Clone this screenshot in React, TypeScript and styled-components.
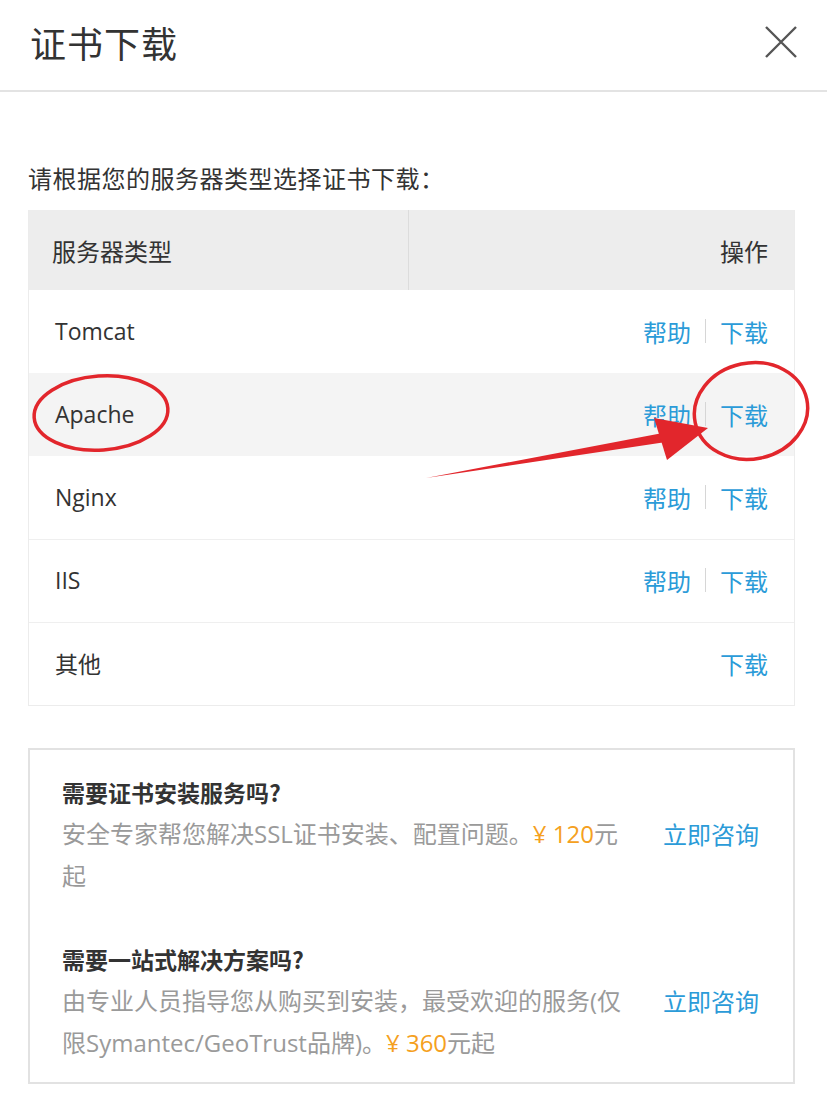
import React from 'react';
import styled, { createGlobalStyle } from 'styled-components';

const GlobalStyle = createGlobalStyle`
  html, body {
    margin: 0;
    padding: 0;
    background: #ffffff;
  }
  body {
    font-family: "Open Sans", "Noto Sans CJK SC", sans-serif;
    color: #333333;
  }
`;

const colors = {
  text: '#333333',
  muted: '#9a9a9a',
  link: '#2b9bd8',
  price: '#f5a020',
  mark: '#e2262c',
};

const Page = styled.div`
  position: relative;
  width: 827px;
  height: 1118px;
  overflow: hidden;
`;

const Header = styled.div`
  height: 90px;
  padding: 0 28px 0 30px;
  display: flex;
  align-items: center;
  justify-content: space-between;
  border-bottom: 2px solid #e3e3e3;
`;

const Title = styled.h1`
  margin: 0;
  font-size: 36px;
  font-weight: 400;
  letter-spacing: 1px;
  color: ${colors.text};
  font-family: "Noto Sans CJK SC", sans-serif;
  line-height: 1;
  padding-bottom: 6px;
`;

const CloseButton = styled.button`
  width: 36px;
  height: 36px;
  padding: 0;
  border: none;
  background: none;
  display: flex;
  align-items: center;
  justify-content: center;
  margin-bottom: 6px;
`;

const Body = styled.div`
  padding: 70px 32px 0 28px;
`;

const Intro = styled.p`
  margin: 0 0 16px;
  font-size: 24px;
  letter-spacing: 0.5px;
  line-height: 32px;
  color: ${colors.text};
  font-family: "Noto Sans CJK SC", sans-serif;
`;

const Table = styled.div`
  border-left: 1px solid #ececec;
  border-right: 1px solid #ececec;
  border-bottom: 1px solid #ececec;
`;

const HeadRow = styled.div`
  display: grid;
  grid-template-columns: 379px 1fr;
  height: 80px;
  background: #ededed;
  font-size: 24px;
  color: ${colors.text};
  font-family: "Noto Sans CJK SC", sans-serif;
`;

const HeadCell = styled.div<{ right?: boolean }>`
  display: flex;
  align-items: center;
  justify-content: ${(p) => (p.right ? 'flex-end' : 'flex-start')};
  padding: 0 26px 0 23px;
  border-left: ${(p) => (p.right ? '1px solid #dcdcdc' : 'none')};
`;

const Row = styled.div<{ active?: boolean; divided?: boolean }>`
  display: flex;
  align-items: center;
  justify-content: space-between;
  height: 83px;
  padding: 0 26px 2px 26px;
  background: ${(p) => (p.active ? '#f4f4f4' : '#ffffff')};
  border-top: ${(p) => (p.divided ? '1px solid #efefef' : '1px solid transparent')};
  box-sizing: border-box;
`;

const ServerName = styled.span`
  font-size: 23px;
  font-family: "Open Sans", "Noto Sans CJK SC", sans-serif;
  color: ${colors.text};
`;

const Actions = styled.div`
  display: flex;
  align-items: center;
  gap: 14px;
`;

const Link = styled.a`
  font-size: 24px;
  color: ${colors.link};
  text-decoration: none;
  font-family: "Noto Sans CJK SC", sans-serif;
  cursor: pointer;
`;

const Sep = styled.span`
  width: 1px;
  height: 24px;
  background: #d6d6d6;
`;

const ServiceBox = styled.div`
  margin-top: 42px;
  border: 2px solid #e2e2e2;
  padding: 21px 32px 18px 32px;
  display: flex;
  flex-direction: column;
  gap: 41px;
`;

const Service = styled.div`
  display: flex;
  flex-direction: column;
`;

const ServiceTitle = styled.h3`
  margin: 0;
  font-size: 23px;
  line-height: 42px;
  font-weight: 700;
  color: ${colors.text};
  font-family: "Noto Sans CJK SC", sans-serif;
`;

const ServiceLine = styled.div`
  display: flex;
  align-items: flex-start;
  justify-content: space-between;
`;

const ServiceDesc = styled.p`
  margin: 0;
  width: 576px;
  font-size: 24px;
  line-height: 42px;
  color: ${colors.muted};
  font-family: "Open Sans", "Noto Sans CJK SC", sans-serif;
`;

const Price = styled.span`
  color: ${colors.price};
`;

const Consult = styled(Link)`
  flex: none;
  line-height: 42px;
  margin-right: 2px;
`;

const Marks = styled.svg`
  position: absolute;
  left: 0;
  top: 0;
  pointer-events: none;
`;

const servers = [
  { name: 'Tomcat', help: true },
  { name: 'Apache', help: true, active: true },
  { name: 'Nginx', help: true },
  { name: 'IIS', help: true },
  { name: '其他', help: false },
];

export default function App() {
  return (
    <Page>
      <GlobalStyle />
      <Header>
        <Title>证书下载</Title>
        <CloseButton aria-label="关闭">
          <svg width="34" height="34" viewBox="0 0 34 34">
            <path d="M2 2 L32 32 M32 2 L2 32" stroke="#555" strokeWidth="2.4" fill="none" />
          </svg>
        </CloseButton>
      </Header>
      <Body>
        <Intro>请根据您的服务器类型选择证书下载：</Intro>
        <Table>
          <HeadRow>
            <HeadCell>服务器类型</HeadCell>
            <HeadCell right>操作</HeadCell>
          </HeadRow>
          {servers.map((s, i) => (
            <Row key={s.name} active={s.active} divided={i > 2}>
              <ServerName>{s.name}</ServerName>
              <Actions>
                {s.help && (
                  <>
                    <Link>帮助</Link>
                    <Sep />
                  </>
                )}
                <Link>下载</Link>
              </Actions>
            </Row>
          ))}
        </Table>
        <ServiceBox>
          <Service>
            <ServiceTitle>需要证书安装服务吗?</ServiceTitle>
            <ServiceLine>
              <ServiceDesc>
                安全专家帮您解决SSL证书安装、配置问题。<Price>¥ 120</Price>元起
              </ServiceDesc>
              <Consult>立即咨询</Consult>
            </ServiceLine>
          </Service>
          <Service>
            <ServiceTitle>需要一站式解决方案吗?</ServiceTitle>
            <ServiceLine>
              <ServiceDesc>
                由专业人员指导您从购买到安装，最受欢迎的服务(仅限Symantec/GeoTrust品牌)。<Price>¥ 360</Price>元起
              </ServiceDesc>
              <Consult>立即咨询</Consult>
            </ServiceLine>
          </Service>
        </ServiceBox>
      </Body>
      <Marks width="827" height="1118" viewBox="0 0 827 1118">
        <ellipse cx="101" cy="413" rx="67" ry="37" fill="none" stroke={colors.mark} strokeWidth="3.5" transform="rotate(-4 101 413)" />
        <ellipse cx="751" cy="411" rx="57" ry="48" fill="none" stroke={colors.mark} strokeWidth="3.5" transform="rotate(-12 751 411)" />
        <path d="M426 478 L668 432 L666 442 Z" fill={colors.mark} />
        <path d="M654 418 L708 428 L667 460 Z" fill={colors.mark} />
      </Marks>
    </Page>
  );
}
